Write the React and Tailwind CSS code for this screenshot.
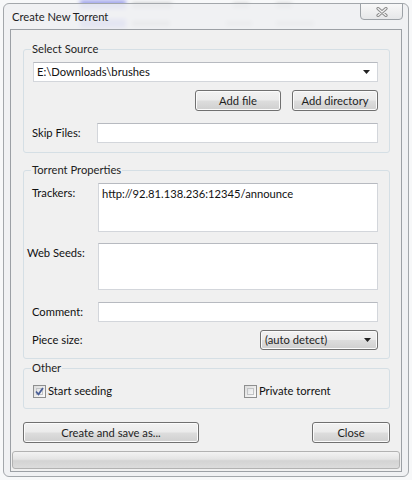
import React from "react";

function Btn({ className = "", children }) {
  return (
    <div
      className={
        "flex items-center justify-center rounded-[3px] border border-[#707070] bg-[linear-gradient(180deg,#f2f2f2_0%,#ebebeb_48%,#dddddd_52%,#cfcfcf_100%)] shadow-[inset_0_0_0_1px_#fbfbfb] text-[#1e1e1e] " +
        className
      }
    >
      {children}
    </div>
  );
}

function Arrow() {
  return (
    <svg width="7" height="4" viewBox="0 0 7 4">
      <path d="M0 0h7L3.5 4z" fill="#222" />
    </svg>
  );
}

function Check({ checked }) {
  return (
    <div className="w-[13px] h-[13px] border border-[#8e8f8f] bg-[linear-gradient(135deg,#dcdcdc,#fbfbfb)] p-[2px] flex items-center justify-center">
      <div className="w-full h-full border border-[#c2c4c6] bg-[linear-gradient(135deg,#e2e4e6,#f7f7f7)] flex items-center justify-center">
        {checked && (
          <svg width="9" height="9" viewBox="0 0 9 9" className="-m-[2px]">
            <path d="M1 4.5l2.5 2.8L8 1" fill="none" stroke="#4a5f97" strokeWidth="1.8" />
          </svg>
        )}
      </div>
    </div>
  );
}

function TextBox({ className = "", children }) {
  return (
    <div
      className={
        "bg-white border border-[#d3d6db] border-t-[#b7bac0] text-[#111] " + className
      }
    >
      {children}
    </div>
  );
}

function Group({ title, className = "", children }) {
  return (
    <fieldset
      className={"border border-[#d5dfe5] rounded-[3px] p-0 min-w-0 " + className}
    >
      <legend className="ml-[7px] px-[1px] leading-[16px] text-[#1e1e1e]">{title}</legend>
      {children}
    </fieldset>
  );
}

export default function App() {
  return (
    <div
      className="relative w-[412px] h-[480px] overflow-hidden bg-[#f7f8f9] text-[11.2px] leading-[16px] text-[#111]"
      style={{ fontFamily: 'Lato, "Noto Sans", sans-serif' }}
    >
      {/* blurred stuff behind the glass frame */}
      <div className="absolute left-[80px] top-0 w-[46px] h-[9px] bg-[#6d73e6] opacity-60 blur-[2px]" />
      <div className="absolute left-[80px] top-[19px] w-[46px] h-[9px] bg-[#6d73e6] opacity-60 blur-[2px]" />
      <div className="absolute left-[132px] top-[3px] w-[40px] h-[5px] bg-[#777] opacity-40 blur-[2px]" />
      <div className="absolute left-[132px] top-[21px] w-[38px] h-[5px] bg-[#777] opacity-40 blur-[2px]" />
      <div className="absolute left-[233px] top-[3px] w-[16px] h-[5px] bg-[#777] opacity-30 blur-[2px]" />
      <div className="absolute left-[276px] top-[3px] w-[16px] h-[5px] bg-[#777] opacity-30 blur-[2px]" />
      <div className="absolute left-[226px] top-[21px] w-[26px] h-[5px] bg-[#777] opacity-30 blur-[2px]" />
      <div className="absolute left-[276px] top-[21px] w-[38px] h-[5px] bg-[#777] opacity-30 blur-[2px]" />

      {/* window */}
      <div className="relative ml-[3px] mt-[3px] w-[406px] h-[474px] rounded-[6px] border border-[#a3a7ab] bg-[#eef0f2]/85 flex flex-col px-[6px] pb-[4px]">
        <div className="h-[25px] flex items-center pl-[2px] text-[#1e1e1e]">Create New Torrent</div>
        <div className="absolute top-[-1px] right-[5px] w-[43px] h-[17px] rounded-b-[4px] border border-[#9da2a7] bg-[linear-gradient(180deg,#f8f8f8,#e6e7e9)] flex items-center justify-center">
          <svg width="12" height="10" viewBox="0 0 12 10">
            <path d="M2 1.5l8 7M10 1.5l-8 7" stroke="#8b8b8b" strokeWidth="3.2" strokeLinecap="round" />
            <path d="M2 1.5l8 7M10 1.5l-8 7" stroke="#f4f4f4" strokeWidth="1.2" strokeLinecap="round" />
          </svg>
        </div>

        <div className="flex-1 border border-[#9ca0a5] bg-[#f0f0f0] flex flex-col pl-[12px] pr-[11px]">
          <Group title="Select Source" className="mt-[11px]">
            <div className="pl-[9px] pr-[11px] pb-[9px] flex flex-col">
              <TextBox className="mt-[5px] h-[20px] flex items-center justify-between pl-[3px] pr-[7px]">
                <span>E:\Downloads\brushes</span>
                <Arrow />
              </TextBox>
              <div className="mt-[8px] flex justify-end gap-[11px]">
                <Btn className="w-[86px] h-[21px]">Add file</Btn>
                <Btn className="w-[86px] h-[21px]">Add directory</Btn>
              </div>
              <div className="mt-[12px] flex items-center">
                <div className="w-[65px] -ml-[1px]">Skip Files:</div>
                <TextBox className="flex-1 h-[20px]" />
              </div>
            </div>
          </Group>

          <Group title="Torrent Properties" className="mt-[9px]">
            <div className="pr-[11px] pb-[8px] flex flex-col">
              <div className="mt-[5px] flex">
                <div className="w-[74px] pt-[2px] pl-[8px]">Trackers:</div>
                <TextBox className="flex-1 h-[49px] pl-[3px] pt-[2px]">http://92.81.138.236:12345/announce</TextBox>
              </div>
              <div className="mt-[11px] flex">
                <div className="w-[74px] pt-[2px] pl-[3px]">Web Seeds:</div>
                <TextBox className="flex-1 h-[47px]" />
              </div>
              <div className="mt-[12px] flex items-center">
                <div className="w-[74px] pl-[8px]">Comment:</div>
                <TextBox className="flex-1 h-[20px]" />
              </div>
              <div className="mt-[8px] flex items-center justify-between">
                <div className="w-[74px] pl-[8px]">Piece size:</div>
                <Btn className="w-[118px] h-[20px] !justify-between pl-[4px] pr-[6px]">
                  <span>(auto detect)</span>
                  <Arrow />
                </Btn>
              </div>
            </div>
          </Group>

          <Group title="Other" className="mt-[1px]">
            <div className="pl-[9px] pt-[7px] pb-[9px] flex items-center">
              <div className="w-[211px] flex items-center gap-[2px]">
                <Check checked />
                <span>Start seeding</span>
              </div>
              <div className="flex items-center gap-[2px]">
                <Check />
                <span>Private torrent</span>
              </div>
            </div>
          </Group>

          <div className="mt-[13px] flex justify-between">
            <Btn className="w-[176px] h-[21px]">Create and save as...</Btn>
            <Btn className="w-[78px] h-[21px]">Close</Btn>
          </div>

          <div className="mt-[8px] -ml-[11px] w-[388px] h-[18px] rounded-[3px] border border-[#b2b2b2] bg-[linear-gradient(180deg,#f3f3f3_0%,#e4e4e4_45%,#d3d3d3_55%,#dcdcdc_100%)]" />
        </div>
      </div>
    </div>
  );
}
